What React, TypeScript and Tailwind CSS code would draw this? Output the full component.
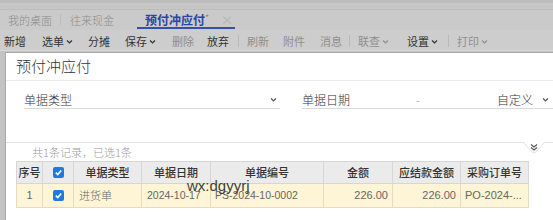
import React from 'react';

const cjk = { fontFamily: '"Noto Sans CJK SC", "Liberation Sans", sans-serif' };
const latin = { fontFamily: '"Liberation Sans", "Noto Sans CJK SC", sans-serif' };

const Caret = ({ className = '' }: { className?: string }) => (
    <svg viewBox="0 0 10 10" className={`w-[7px] h-[7px] ${className}`} fill="none" stroke="currentColor" strokeWidth={1.8}>
        <path d="M1.5 3.5 L5 7 L8.5 3.5" />
    </svg>
);

const Check = () => (
    <span className="inline-flex w-[11px] h-[11px] rounded-[2px] bg-[#1f7ae0] items-center justify-center">
        <svg viewBox="0 0 10 10" className="w-[9px] h-[9px]" fill="none" stroke="white" strokeWidth={1.8}>
            <path d="M2 5.2 L4.2 7.3 L8 2.8" />
        </svg>
    </span>
);

const toolbar: { label: string; x: number; caret?: boolean; muted?: boolean; sepBefore?: boolean }[] = [
    { label: '新增', x: 4 },
    { label: '选单', x: 42, caret: true },
    { label: '分摊', x: 88 },
    { label: '保存', x: 125, caret: true },
    { label: '删除', x: 172, muted: true },
    { label: '放弃', x: 207 },
    { label: '刷新', x: 247, muted: true, sepBefore: true },
    { label: '附件', x: 283, muted: true },
    { label: '消息', x: 320, muted: true },
    { label: '联查', x: 358, caret: true, muted: true, sepBefore: true },
    { label: '设置', x: 407, caret: true },
    { label: '打印', x: 457, caret: true, muted: true, sepBefore: true },
];

const cols = [
    { title: '序号', w: 26 },
    { title: '', w: 31 },
    { title: '单据类型', w: 68 },
    { title: '单据日期', w: 69 },
    { title: '单据编号', w: 113 },
    { title: '金额', w: 69 },
    { title: '应结款金额', w: 68 },
    { title: '采购订单号', w: 68 },
];

const App = () => {
    return (
        <div className="relative w-[553px] h-[220px] overflow-hidden bg-[#c3c3c3] flex flex-col font-light" style={cjk}>
            {/* top strip */}
            <div className="h-[10px] bg-[#c6c6c6] border-t-[3px] border-[#bcbcbc] border-b border-b-[#bdbdbd]" />

            {/* tabs */}
            <div className="h-[20px] bg-[#cacaca] relative text-[11px] text-[#8a8a8a]">
                <span className="absolute left-[8px] top-[2px]">我的桌面</span>
                <span className="absolute left-[60px] top-[4px] h-[11px] w-px bg-[#bdbdbd]" />
                <span className="absolute left-[70px] top-[2px]">往来现金</span>
                <span className="absolute left-[145px] top-[1px] text-[12px] font-bold text-[#2c44a6]">预付冲应付</span>
                <span className="absolute left-[205px] top-[0px] text-[10px] text-[#d9534f]">*</span>
                <span className="absolute left-[221px] top-[1px] text-[12px] text-[#a8a8a8]">×</span>
                <span className="absolute left-[137px] top-[17px] w-[98px] h-[2px] bg-[#3a4fa8]" />
            </div>

            {/* toolbar */}
            <div className="h-[21px] bg-[#cdcdcd] relative text-[11px] border-b border-[#d8d8d8]">
                {toolbar.map((t) => (
                    <React.Fragment key={t.label}>
                        {t.sepBefore && <span className="absolute top-[5px] h-[12px] w-px bg-[#b9b9b9]" style={{ left: t.x - 9 }} />}
                        <span
                            className={`absolute top-[3px] flex items-center gap-[2px] font-normal ${t.muted ? 'text-[#8f8f8f]' : 'text-[#333]'}`}
                            style={{ left: t.x }}
                        >
                            {t.label}
                            {t.caret && <Caret />}
                        </span>
                    </React.Fragment>
                ))}
            </div>

            {/* dialog */}
            <div className="flex-1 ml-[5px] mt-[1px] bg-white border-l border-t border-[#a9a9a9] flex flex-col relative">
                <div className="h-[28px] pl-[10px] flex items-center border-b border-[#ececec] text-[15px] text-[#333]">
                    预付冲应付
                </div>

                {/* filters */}
                <div className="flex pl-[18px] pt-[10px] text-[12px] text-[#333]">
                    <div className="w-[256px] h-[18px] flex items-center justify-between border-b border-[#d9d9d9] pr-[3px]">
                        <span>单据类型</span>
                        <Caret className="text-[#555]" />
                    </div>
                    <div className="ml-[22px] flex-1 h-[18px] flex items-center border-b border-[#d9d9d9]">
                        <span>单据日期</span>
                        <span className="ml-[66px] text-[#999]">-</span>
                        <span className="ml-auto">自定义</span>
                        <Caret className="ml-[9px] mr-[4px] text-[#555]" />
                    </div>
                </div>

                {/* separator with collapse notch */}
                <div className="mt-[33px] h-px bg-[#e2e2e2] relative">
                    <div className="absolute left-[517px] top-0 w-[22px] h-[12px] flex justify-center">
                        <svg viewBox="0 0 22 12" className="w-[22px] h-[12px]">
                            <path d="M0 0 L22 0 L13 10 Q11 12 9 10 Z" fill="white" />
                            <path d="M0 0 L9 10 Q11 12 13 10 L22 0" fill="none" stroke="#e0e0e0" />
                            <path d="M8 2.5 L11 5 L14 2.5 M8 5.5 L11 8 L14 5.5" fill="none" stroke="#555" strokeWidth={1.1} />
                        </svg>
                    </div>
                </div>

                <div className="pl-[26px] h-[18px] flex items-center text-[11px] text-[#9a9a9a]">共1条记录，已选1条</div>

                {/* table */}
                <table className="ml-[10px] border-collapse text-[11px] table-fixed" style={{ width: 512 }}>
                    <colgroup>
                        {cols.map((c, i) => (
                            <col key={i} style={{ width: c.w }} />
                        ))}
                    </colgroup>
                    <thead>
                        <tr className="h-[22px] bg-[#ebebeb] text-[#333]">
                            {cols.map((c, i) => (
                                <th key={i} className="border border-[#d6d6d6] font-medium text-center p-0">
                                    {i === 1 ? <span className="flex justify-center"><Check /></span> : c.title}
                                </th>
                            ))}
                        </tr>
                    </thead>
                    <tbody>
                        <tr className="h-[24px] bg-[#fdf5d5] text-[#666]">
                            <td className="border border-[#e4dcc0] text-center" style={latin}>1</td>
                            <td className="border border-[#e4dcc0]"><span className="flex justify-center"><Check /></span></td>
                            <td className="border border-[#e4dcc0] pl-[5px]">进货单</td>
                            <td className="border border-[#e4dcc0] pl-[5px] text-[10.5px]" style={latin}>2024-10-17</td>
                            <td className="border border-[#e4dcc0] pl-[4px] whitespace-nowrap text-[10.5px]" style={latin}>PS-2024-10-0002</td>
                            <td className="border border-[#e4dcc0] text-right pr-[4px]" style={latin}>226.00</td>
                            <td className="border border-[#e4dcc0] text-right pr-[4px]" style={latin}>226.00</td>
                            <td className="border border-[#e4dcc0] pl-[4px] whitespace-nowrap" style={latin}>PO-2024-...</td>
                        </tr>
                    </tbody>
                </table>
            </div>

            {/* watermark */}
            <span className="absolute left-[187px] top-[178px] text-[15px] text-[#3f3f3f] leading-none font-normal" style={latin}>wx:dgyyrj</span>
        </div>
    );
};

export default App;
